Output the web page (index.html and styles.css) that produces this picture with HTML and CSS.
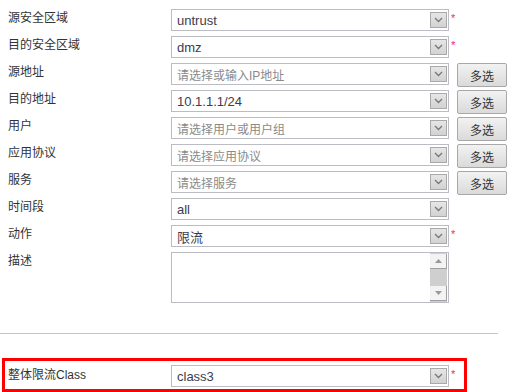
FILE: index.html
```html
<!DOCTYPE html>
<html lang="zh-CN">
<head>
  <meta charset="UTF-8">
  <title>安全策略</title>
  <link rel="stylesheet" href="styles.css">
</head>
<body>
  <div class="form">
    <div class="row">
      <label class="label">源安全区域</label>
      <div class="field"><span class="value">untrust</span><span class="drop"><svg width="9" height="6" viewBox="0 0 9 6"><polyline points="1,1 4.5,4.5 8,1" fill="none" stroke="#777" stroke-width="1.3"/></svg></span></div>
      <span class="star">*</span>
    </div>
    <div class="row">
      <label class="label">目的安全区域</label>
      <div class="field"><span class="value">dmz</span><span class="drop"><svg width="9" height="6" viewBox="0 0 9 6"><polyline points="1,1 4.5,4.5 8,1" fill="none" stroke="#777" stroke-width="1.3"/></svg></span></div>
      <span class="star">*</span>
    </div>
    <div class="row">
      <label class="label">源地址</label>
      <div class="field"><span class="value hint">请选择或输入IP地址</span><span class="drop"><svg width="9" height="6" viewBox="0 0 9 6"><polyline points="1,1 4.5,4.5 8,1" fill="none" stroke="#777" stroke-width="1.3"/></svg></span></div>
      <button class="multi">多选</button>
    </div>
    <div class="row">
      <label class="label">目的地址</label>
      <div class="field"><span class="value">10.1.1.1/24</span><span class="drop"><svg width="9" height="6" viewBox="0 0 9 6"><polyline points="1,1 4.5,4.5 8,1" fill="none" stroke="#777" stroke-width="1.3"/></svg></span></div>
      <button class="multi">多选</button>
    </div>
    <div class="row">
      <label class="label">用户</label>
      <div class="field"><span class="value hint">请选择用户或用户组</span><span class="drop"><svg width="9" height="6" viewBox="0 0 9 6"><polyline points="1,1 4.5,4.5 8,1" fill="none" stroke="#777" stroke-width="1.3"/></svg></span></div>
      <button class="multi">多选</button>
    </div>
    <div class="row">
      <label class="label">应用协议</label>
      <div class="field"><span class="value hint">请选择应用协议</span><span class="drop"><svg width="9" height="6" viewBox="0 0 9 6"><polyline points="1,1 4.5,4.5 8,1" fill="none" stroke="#777" stroke-width="1.3"/></svg></span></div>
      <button class="multi">多选</button>
    </div>
    <div class="row">
      <label class="label">服务</label>
      <div class="field"><span class="value hint">请选择服务</span><span class="drop"><svg width="9" height="6" viewBox="0 0 9 6"><polyline points="1,1 4.5,4.5 8,1" fill="none" stroke="#777" stroke-width="1.3"/></svg></span></div>
      <button class="multi">多选</button>
    </div>
    <div class="row">
      <label class="label">时间段</label>
      <div class="field"><span class="value">all</span><span class="drop"><svg width="9" height="6" viewBox="0 0 9 6"><polyline points="1,1 4.5,4.5 8,1" fill="none" stroke="#777" stroke-width="1.3"/></svg></span></div>
    </div>
    <div class="row">
      <label class="label">动作</label>
      <div class="field"><span class="value">限流</span><span class="drop"><svg width="9" height="6" viewBox="0 0 9 6"><polyline points="1,1 4.5,4.5 8,1" fill="none" stroke="#777" stroke-width="1.3"/></svg></span></div>
      <span class="star">*</span>
    </div>
    <div class="row tall">
      <label class="label">描述</label>
      <div class="memo">
        <div class="memo-text"></div>
        <div class="scroll">
          <span class="sbtn"><svg width="7" height="4" viewBox="0 0 7 4"><polygon points="0,4 3.5,0 7,4" fill="#999"/></svg></span>
          <span class="track"></span>
          <span class="sbtn"><svg width="7" height="4" viewBox="0 0 7 4"><polygon points="0,0 3.5,4 7,0" fill="#999"/></svg></span>
        </div>
      </div>
    </div>
  </div>

  <hr class="divider">

  <!-- Highlighted row -->
  <div class="highlight">
    <div class="row">
      <label class="label">整体限流Class</label>
      <div class="field"><span class="value">class3</span><span class="drop"><svg width="9" height="6" viewBox="0 0 9 6"><polyline points="1,1 4.5,4.5 8,1" fill="none" stroke="#777" stroke-width="1.3"/></svg></span></div>
      <span class="star">*</span>
    </div>
  </div>
</body>
</html>
```

FILE: styles.css
```css
body {
  margin: 0;
  background: #fff;
  font-family: "Liberation Sans", Arial, "Noto Sans CJK SC", sans-serif;
  font-size: 12px;
  color: #333;
}
.form {
  padding-top: 9px;
}
.row {
  display: flex;
  align-items: flex-start;
  height: 22px;
  margin-bottom: 5px;
}
.row.tall {
  height: 51px;
  margin-bottom: 0;
}
.label {
  width: 163px;
  padding-left: 8px;
  line-height: 18px;
  flex-shrink: 0;
}
.field {
  box-sizing: border-box;
  width: 278px;
  height: 22px;
  border: 1px solid #bcbcc4;
  display: flex;
  align-items: center;
  padding: 0 1px 0 5px;
  flex-shrink: 0;
}
.value {
  flex: 1;
  font-size: 13px;
  color: #3c3c4c;
  padding-top: 1px;
}
.value.hint {
  font-size: 12px;
  color: #8a8a8a;
}
.drop {
  box-sizing: border-box;
  width: 17px;
  height: 16px;
  border: 1px solid #a9a9a9;
  background: linear-gradient(#e6e6e6, #d2d2d2);
  display: flex;
  align-items: center;
  justify-content: center;
  margin-top: -1px;
}
.star {
  color: #ff2266;
  font-size: 11px;
  line-height: 1;
  margin: 4px 0 0 2px;
}
.multi {
  box-sizing: border-box;
  width: 50px;
  height: 24px;
  margin-left: 8px;
  border: 1px solid #a8a8a8;
  border-radius: 2px;
  background: linear-gradient(#f2f2f2, #dadada);
  font-family: "Noto Sans CJK SC", sans-serif;
  font-size: 12px;
  color: #333;
  padding: 0;
}
.memo {
  box-sizing: border-box;
  width: 278px;
  height: 51px;
  border: 1px solid #bcbcc4;
  display: flex;
}
.memo-text {
  flex: 1;
}
.scroll {
  width: 17px;
  background: #cfcfcf;
  display: flex;
  flex-direction: column;
  justify-content: space-between;
  padding: 1px 0;
  margin-right: 1px;
}
.sbtn {
  box-sizing: border-box;
  height: 15px;
  background: #f3f3f3;
  border-right: 1px solid #a0a0a0;
  border-bottom: 1px solid #a0a0a0;
  display: flex;
  align-items: center;
  justify-content: center;
}
.track {
  flex: 1;
}
.divider {
  border: 0;
  border-top: 1px solid #c4c4c8;
  width: 498px;
  margin: 30px 0 0 0;
}
.highlight {
  box-sizing: border-box;
  width: 465px;
  height: 34px;
  margin: 24px 0 0 2px;
  border: 3px solid #ff0000;
  padding-top: 4px;
}
.highlight .row {
  margin-bottom: 0;
}
.highlight .label {
  width: 163px;
  padding-left: 3px;
  line-height: 20px;
}
```
